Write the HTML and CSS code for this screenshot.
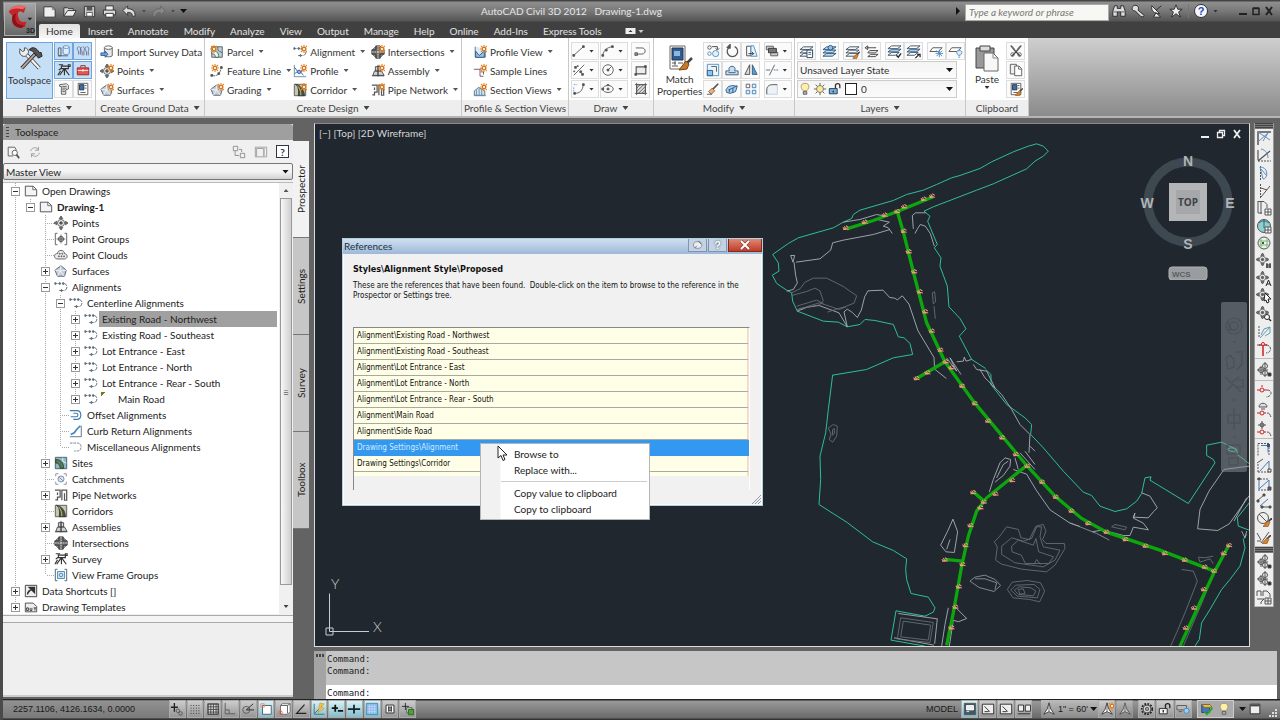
FILE: index.html
```html
<!DOCTYPE html>
<html lang="en">
<head>
<meta charset="utf-8">
<title>AutoCAD Civil 3D 2012 - Drawing-1.dwg</title>
<link rel="stylesheet" href="styles.css">
</head>
<body>
<svg class="defs" aria-hidden="true">
  <!-- shared parts -->
  <symbol id="spark" viewBox="0 0 8 8"><path d="M4 0v8M0 4h8M1 1l6 6M7 1L1 7" stroke="#e08a2c" stroke-width="1.2"/><circle cx="4" cy="4" r="1.6" fill="#fff" stroke="#d9701c"/></symbol>
  <symbol id="brush" viewBox="0 0 8 8"><path d="M8 0L4.500 3.500" stroke="#444" stroke-width="1.500"/><path d="M4.500 2.500L6 4 4.500 7.500 0 7.500z" fill="#d8862e" stroke="#8a4a10" stroke-width=".6"/></symbol>
  <!-- quick access -->
  <symbol id="new" viewBox="0 0 16 16"><path d="M2 3h9l3 3v8H2z" fill="#eee" stroke="#333"/><path d="M11 3v3h3" stroke="#777"/></symbol>
  <symbol id="open" viewBox="0 0 16 16"><path d="M2 13V4h4l1 1h5v3" fill="#ddd" stroke="#333"/><path d="M2 13l4-6h9l-3 6z" fill="#eee" stroke="#333"/></symbol>
  <symbol id="save" viewBox="0 0 16 16"><path d="M2.500 2.500h11v11h-11z" fill="#ccc" stroke="#333"/><path d="M5 3h6v4H5z" fill="#555" stroke="none"/><path d="M5 9h6v4H5z" fill="#fff" stroke="#555"/></symbol>
  <symbol id="print" viewBox="0 0 16 16"><path d="M4 2h8v5H4z" fill="#eee" stroke="#333"/><path d="M1.500 6.500h13v5h-13z" fill="#ddd" stroke="#333"/><path d="M4 10h8v4H4z" fill="#fff" stroke="#333"/></symbol>
  <symbol id="undo" viewBox="0 0 16 16"><path d="M1 7l5-5v3c5 0 8 2 8 8h-3c0-3-1-4-5-4v3z" fill="#ddd" stroke="#333"/></symbol>
  <symbol id="redo" viewBox="0 0 16 16"><path d="M15 7l-5-5v3c-5 0-8 2-8 8h3c0-3 1-4 5-4v3z" fill="#888" stroke="#666"/></symbol>
  <!-- palettes -->
  <symbol id="tools" viewBox="0 0 28 28"><path d="M10 9l14 15" stroke="#333" stroke-width="4"/><path d="M10 9l14 15" stroke="#f4f4f4" stroke-width="2.500"/><path d="M3 3l3 3 2-1 0-3c4 0 5 4 4 6l-3 3c-3 1-7-2-6-6z" fill="#eee" stroke="#444"/><path d="M20 8L5 24" stroke="#333" stroke-width="4"/><path d="M19 9L5 24" stroke="#bda49a" stroke-width="2"/><path d="M13 4c4-4 8-2 11 3l2 0 1 4-4 2-3-4c-2-3-4-4-7-5z" fill="#555" stroke="#222"/></symbol>
  <symbol id="prospector" viewBox="0 0 16 16"><path d="M1.500 4.500h3v9h-3zM1.500 13.500h11"/><path d="M7 3.500v7c0 2 7 2 7 0v-7" fill="#dceeff" stroke="#4a87c0"/><ellipse cx="10.500" cy="3.500" rx="3.500" ry="1.500" fill="#fff" stroke="#4a87c0"/></symbol>
  <symbol id="settings" viewBox="0 0 16 16"><path d="M3 3c-3 2-1 4 0 5v4M7 3c-3 2-1 4 0 6v4M12 3c-3 2-1 4 0 6v4M4 3c2 2 1 4 1 5v4M8 3c3 2 1 4 1 6v4M13 3c3 2 1 4 1 6v4" stroke="#668"/></symbol>
  <symbol id="survey" viewBox="0 0 16 16"><path d="M2 2h5M5 3.500h8v3H5zM13 2h2v2h-2zM8.500 7v7M8 7L3 14M9 7l5 7M2 8l3-2M1 14l3-5" stroke="#333" stroke-width="1.300"/></symbol>
  <symbol id="toolbox" viewBox="0 0 16 16"><path d="M5.500 5V3h5v2" stroke="#822"/><path d="M1.500 5.500h13v8h-13z" fill="#e4554c" stroke="#922"/><path d="M2 8.500h12M8 7v3" stroke="#fff"/></symbol>
  <symbol id="sheet" viewBox="0 0 16 16"><path d="M3 3l8-1 2 2v4l-3 1v5H5V5H3z" fill="#eee"/><path d="M6 5h5M6 7h5M6 9h3M6 11h3"/></symbol>
  <symbol id="props" viewBox="0 0 16 16"><path d="M2.500 1.500h11v13h-11z" fill="#fff"/><path d="M4 3h5v6H4z" fill="#3c6ca8" stroke="#234"/><path d="M10 4h2M10 7h2M5 12h6"/></symbol>
  <!-- objects -->
  <symbol id="import" viewBox="0 0 16 16"><path d="M5 3v9c0 2 9 2 9 0V3" fill="#e4e8ec"/><ellipse cx="9.500" cy="3" rx="4.500" ry="2" fill="#fff"/><path d="M1 9h5v-2l3 3.500L6 14v-2H1z" fill="#6ba3dc" stroke="#2a5c98"/></symbol>
  <symbol id="point" viewBox="0 0 16 16"><circle cx="8" cy="8" r="4" fill="#eee"/><circle cx="8" cy="8" r="1.500" fill="#555"/><path d="M8 0l2 3H6zM8 16l2-3H6zM0 8l3-2v4zM16 8l-3-2v4z" fill="#777"/></symbol>
  <symbol id="surface" viewBox="0 0 16 16"><path d="M8 2l6 5-2 7H4L1 7z" fill="#c3ced8" stroke="#556"/><path d="M8 2l-1 6 5 6M7 8l-3 6M1 7l6 1 7-1" stroke="#f2f6fa"/></symbol>
  <symbol id="parcel" viewBox="0 0 16 16"><path d="M2 2h12v12H2z" fill="#b9d4e4"/><path d="M2 7c5-1 8 1 8 7H6c0-3-1-4-4-4z" fill="#f0f4ef" stroke="#464"/><path d="M9 2v4l5 3" stroke="#467"/></symbol>
  <symbol id="sites" viewBox="0 0 16 16"><path d="M1.500 1.500h13v13h-13z" fill="#8fb8c4" stroke="#456"/><path d="M2 4c6 0 9 4 9 10H7C7 10 5 8 2 8z" fill="#5c7a50" stroke="#243"/><path d="M10 2v4l4 2" stroke="#dff"/></symbol>
  <symbol id="feature" viewBox="0 0 16 16"><path d="M2 13c7 2 10-3 11-10" stroke-dasharray="4 1"/><path d="M1 12h2v2H1zM9 10h2v2H9zM12 3h2v2h-2z" fill="#555"/></symbol>
  <symbol id="align" viewBox="0 0 16 16"><path d="M1 4h10" stroke="#567" stroke-dasharray="3 1"/><path d="M11 4c5 0 5 8 0 8H5" stroke="#567" stroke-dasharray="5 1"/><path d="M1 3h1v2H1zM6 3h1v2H6zM10 3h1v2h-1zM8 11h1v2H8z" fill="#9ab" stroke="#567"/></symbol>
  <symbol id="profile" viewBox="0 0 16 16"><path d="M1.500 1v13.500H15" stroke="#5b83a8"/><path d="M2 4l5 7 6-5M2 11l5-4 5 6" stroke="#456"/><circle cx="7" cy="9" r="2" fill="#7ab5e8" stroke="#36c"/></symbol>
  <symbol id="corridor" viewBox="0 0 16 16"><path d="M1.500 1.500h13v13h-13z" fill="#c4c7b4" stroke="#555"/><path d="M3 1.500c3 2 4 7 3 13h7C13 8 9 3 3 1.500z" fill="#4c5043" stroke="#333"/><path d="M5 3c3 3 4 7 4 11" stroke="#ddd35a"/></symbol>
  <symbol id="inter" viewBox="0 0 16 16"><circle cx="8" cy="8" r="6.500" fill="#999" stroke="#666"/><path d="M5.500 1h5v4.500H15v5h-4.500V15h-5v-4.500H1v-5h4.500z" fill="#666" stroke="#333"/><path d="M8 1v14M1 8h14" stroke="#eee" stroke-dasharray="2 1"/></symbol>
  <symbol id="assembly" viewBox="0 0 16 16"><path d="M8 1v13M5 3h6v5H5zM2 13l2-5h8l3 5z" fill="#cdd3d8" stroke="#444"/><path d="M1 13.500h14M8 2v12" stroke="#444"/></symbol>
  <symbol id="pipe" viewBox="0 0 16 16"><path d="M1 2.500h6v8H4v3H1.500M4 5v3M9 14V2.500h5.500V14H12V6" stroke="#555" stroke-width="1.400"/></symbol>
  <symbol id="pview" viewBox="0 0 16 16"><path d="M2.500 2v12H14V4" fill="#dceaf8" stroke="#4a6c94"/><path d="M3 7l4 5 6-5v7H3z" fill="#8fc3ee" stroke="#357"/></symbol>
  <symbol id="sample" viewBox="0 0 16 16"><path d="M1 6h7l5-2M8 6v8h4" stroke="#84434e"/><path d="M9 9h3v3"/></symbol>
  <symbol id="section" viewBox="0 0 16 16"><path d="M1.500 14V9l5-4 7 4v5z" fill="#d4e6f4" stroke="#567"/><path d="M1 14.500h14M4 8v6M7 6v8M10 8v6" stroke="#68a"/></symbol>
  <!-- draw and modify -->
  <symbol id="line" viewBox="0 0 16 16"><path d="M2 13L13 3"/><path d="M1 12h2v2H1zM12 2h2v2h-2z" fill="#555"/></symbol>
  <symbol id="arc" viewBox="0 0 16 16"><path d="M2 13C3 7 7 4 13 3"/><path d="M1 12h2v2H1zM5 6h2v2H5zM12 2h2v2h-2z" fill="#555"/></symbol>
  <symbol id="pline" viewBox="0 0 16 16"><path d="M2 4.500h7c5 0 5 7 0 7H2"/><path d="M1 10h3v3H1z" fill="#999"/></symbol>
  <symbol id="pts" viewBox="0 0 16 16"><path d="M2 14L14 2"/><path d="M3 4h2v2H3zM2 9h1v1H2zM9 9h2v2H9zM11 12h2v2h-2zM6 3h1v1H6z" fill="#555"/></symbol>
  <symbol id="circle" viewBox="0 0 16 16"><circle cx="8" cy="8" r="6"/><path d="M8 8l4-4"/><path d="M7 7h2v2H7z" fill="#555"/></symbol>
  <symbol id="rect" viewBox="0 0 16 16"><path d="M2.500 4.500h11v8h-11z" fill="#e8edf2" stroke-width="1.300"/><path d="M1 12h2v2H1zM12 3h2v2h-2z" fill="#444"/></symbol>
  <symbol id="curve" viewBox="0 0 16 16"><path d="M2 3h4M2 6v5" stroke="#6aa5d8" stroke-dasharray="2 1"/><path d="M3 13c6 0 9-3 10-10"/><path d="M2 12h2v2H2zM12 2h2v2h-2z" fill="#555"/></symbol>
  <symbol id="ellipse" viewBox="0 0 16 16"><ellipse cx="8" cy="8" rx="6" ry="4"/><path d="M7 7h2v2H7zM1 7h2v2H1zM7 3h2v1H7z" fill="#555"/></symbol>
  <symbol id="hatch" viewBox="0 0 16 16"><path d="M3 3h10v10H3z" fill="#ddd"/><path d="M1 3h14M1 13h14M3 1v14M13 1v14M3 7l4-4M3 11l8-8M5 13l8-8M9 13l4-4"/></symbol>
  <symbol id="match" viewBox="0 0 26 28"><path d="M3 2h15v23H3z" fill="#fff" stroke="#666"/><path d="M5 4h11v12H5z" fill="#2f5c94" stroke="#234"/><path d="M7 7h6v5H7z" fill="#8ab8e0" stroke="none"/><path d="M5 19h4M11 19h5M8 17v4M5 22h6" stroke="#555"/><path d="M25 14l-5 5" stroke="#444" stroke-width="2.500"/><path d="M19 17l3 3-2 5-8 1z" fill="#c9792d" stroke="#7c4510"/></symbol>
  <symbol id="copy" viewBox="0 0 16 16"><circle cx="4" cy="4" r="2"/><circle cx="11" cy="11" r="3.500" fill="#e3f1fc" stroke="#4a8cc4"/><circle cx="4" cy="11" r="2" stroke="#4a8cc4"/><path d="M7 3h6v3M11 5l2 2 2-2" stroke="#333"/></symbol>
  <symbol id="rotate" viewBox="0 0 16 16"><path d="M6 3a6 6 0 1 0 5 0" stroke-width="1.400"/><path d="M6 0v5l-4-1z" fill="#555"/></symbol>
  <symbol id="stretch" viewBox="0 0 16 16"><path d="M3 2.500h5v11H3z" stroke="#444"/><path d="M8 2h3l4 12H8z" fill="#e3f1fc" stroke="#4a8cc4"/><path d="M5 11h6M9 9l2 2-2 2" stroke="#333"/></symbol>
  <symbol id="order" viewBox="0 0 16 16"><path d="M1.500 2.500h8v4h-8zM6.500 9.500h8v4h-8z" fill="#ccc"/><path d="M4 5h9v5H4z" fill="#777" stroke="#333"/></symbol>
  <symbol id="scale" viewBox="0 0 16 16"><path d="M1.500 1.500h13v13h-13z" fill="#eaf4fd" stroke="#4a8cc4"/><path d="M1.500 8.500h6v6h-6z" fill="#8fc3ee" stroke="#357"/><path d="M6 4h6v6"/></symbol>
  <symbol id="offset" viewBox="0 0 16 16"><path d="M1 13.500h14V9h-4c3-7-9-7-6 0H1z" fill="#c3dff6" stroke="#357"/><path d="M4 11h8"/></symbol>
  <symbol id="mirror" viewBox="0 0 16 16"><path d="M6.500 2v11H1z" fill="#ddd" stroke="#444"/><path d="M9.500 2v11H15z" fill="#5b9bd5" stroke="#357"/></symbol>
  <symbol id="trim" viewBox="0 0 16 16"><path d="M1 8h5M10 8h2M13 8h2" stroke="#468"/><path d="M11 2L5 14"/></symbol>
  <symbol id="erase" viewBox="0 0 16 16"><path d="M14 2L7 9" stroke="#654" stroke-width="2"/><path d="M7 7l3 3-4 4-3-3z" fill="#e7b27b" stroke="#854"/><path d="M1 14h6"/></symbol>
  <symbol id="explode" viewBox="0 0 16 16"><path d="M1 9l3-4 5-1 5 1-2 6-6 2-4-1z" fill="#9fcdf2" stroke="#357"/><path d="M4 9l5-2 5-3M9 7v5M5 12v-4" stroke="#357"/></symbol>
  <symbol id="array" viewBox="0 0 16 16"><path d="M2.500 2.500h4v4h-4z"/><path d="M9.500 2.500h4v4h-4zM2.500 9.500h4v4h-4zM9.500 9.500h4v4h-4z" fill="#e3f1fc" stroke="#3c7ab5"/></symbol>
  <symbol id="fillet" viewBox="0 0 16 16"><path d="M2 14V9c0-4 3-6 7-6h5v11z" fill="#edf2f6" stroke="#bcd"/><path d="M2 14V9c0-4 3-6 7-6h5"/></symbol>
  <!-- layers -->
  <symbol id="layer" viewBox="0 0 16 16"><path d="M5 3h10l-4 3H1zM5 6.500h10l-4 3H1zM5 10h10l-4 3H1z" fill="#f4f8fb" stroke="#456"/></symbol>
  <symbol id="layerp" viewBox="0 0 16 16"><use href="#layer"/><path d="M8.500 6.500h6v8h-6z" fill="#fff" stroke="#246"/><path d="M10 9h3M10 11h3"/></symbol>
  <symbol id="layerb" viewBox="0 0 16 16"><path d="M5 3h10l-4 3H1zM5 6.500h10l-4 3H1zM5 10h10l-4 3H1z" fill="#b8dcf6" stroke="#357"/><circle cx="9" cy="4" r="2.500" fill="#8fc3ee" stroke="#357"/></symbol>
  <symbol id="layerm" viewBox="0 0 16 16"><use href="#layer"/><use href="#brush" x="8" y="8" width="8" height="8"/></symbol>
  <symbol id="layerv" viewBox="0 0 16 16"><path d="M3 4h10M1 4l3-2v4zM6 7h9l-3 2.500H4zM7 11h8l-3 2.500H4z" fill="#eee" stroke="#444"/></symbol>
  <symbol id="layerc" viewBox="0 0 16 16"><path d="M5 2h10l-4 3H1z" fill="#fff" stroke="#456"/><path d="M5 5.500h10l-4 3H1z" fill="#9fcdf2" stroke="#357"/><path d="M5 9h8l-4 3H1z" fill="#fff" stroke="#456"/><path d="M10 12l2 2 3-4" stroke="#222" stroke-width="1.500"/></symbol>
  <symbol id="layeru" viewBox="0 0 16 16"><path d="M5 2h10l-4 3H1z" fill="#fff" stroke="#456"/><path d="M5 5.500h10l-4 3H1z" fill="#9fcdf2" stroke="#357"/><path d="M5 9h8l-4 3H1z" fill="#fff" stroke="#456"/><path d="M10 15l4-4M12 11h3v3" stroke="#222" stroke-width="1.300"/></symbol>
  <symbol id="layerf" viewBox="0 0 16 16"><path d="M4 4h10l-4 4H1z" fill="#fff"/><path d="M11 6v8M7 10h8M8 7l6 6M14 7l-6 6" stroke="#4a8cc4"/></symbol>
  <symbol id="layero" viewBox="0 0 16 16"><path d="M4 4h10l-4 4H1z" fill="#fff"/><path d="M12 7c4 0 3 3 1 5h-2c-2-2-3-5 1-5zM11 14h2" fill="#dceeff" stroke="#4a8cc4"/></symbol>
  <symbol id="bulb" viewBox="0 0 16 16"><path d="M8 1.500c6 0 5 6 2 8.500H6C3 7.500 2 1.500 8 1.500z" fill="#fbf1a0" stroke="#a88"/><path d="M6 11h4v3H6z" fill="#bbb" stroke="#555"/></symbol>
  <symbol id="sun" viewBox="0 0 16 16"><path d="M8 1v14M1 8h14M3 3l10 10M13 3L3 13"/><circle cx="8" cy="8" r="4" fill="#f8e99a" stroke="#776"/></symbol>
  <symbol id="unlock" viewBox="0 0 16 16"><path d="M1.500 7.500h9v6h-9z" fill="#6fb0dc" stroke="#235"/><path d="M8.500 7V4c0-3 5-3 5 0v3M6 10v2" stroke="#333" stroke-width="1.500"/></symbol>
  <symbol id="lockw" viewBox="0 0 16 16"><path d="M1.500 7.500h9v6h-9z" fill="#f4f4f4" stroke="#222"/><path d="M8.500 7V4c0-3 5-3 5 0v3M6 9v3" stroke="#222" stroke-width="1.500"/></symbol>
  <symbol id="paste" viewBox="0 0 26 28"><path d="M2 4h18v20H2z" fill="#999" stroke="#444"/><path d="M6 2h10v5H6z" fill="#ddd" stroke="#444"/><path d="M10 9h9l5 5v13H10z" fill="#f7f7f7" stroke="#666"/><path d="M19 9v5h5" stroke="#888"/></symbol>
  <symbol id="cut" viewBox="0 0 16 16"><path d="M2 2l5 6 6 6M14 2L9 8l-6 6" stroke="#444" stroke-width="1.300"/><path d="M2 2c2 0 5 4 5 6M14 2c-2 0-5 4-5 6"/><circle cx="4" cy="12" r="2"/><circle cx="12" cy="12" r="2"/></symbol>
  <symbol id="pages" viewBox="0 0 16 16"><path d="M1.500 1.500h7v11h-7z" fill="#eee"/><path d="M6.500 3.500h5l3 3v8h-8z" fill="#fff"/><path d="M11 4v3h3"/></symbol>
  <symbol id="matchs" viewBox="0 0 16 16"><use href="#props"/><use href="#brush" x="7" y="7" width="9" height="9"/></symbol>
  <!-- info centre -->
  <symbol id="binoc" viewBox="0 0 16 16"><path d="M3 2h3v3h4V2h3l2 6v6h-5V9H6v5H1V8z" fill="#ddd" stroke="#222"/><path d="M2 9h4M10 9h4" stroke="#555"/></symbol>
  <symbol id="key" viewBox="0 0 16 16"><path d="M3 2c4-2 7 2 5 5l7 6-1 2-3-1-6-6C1 8 0 4 3 2z" fill="#ddd" stroke="#222"/></symbol>
  <symbol id="dish" viewBox="0 0 16 16"><path d="M2 2c-1 6 3 9 9 9zM7 7l6-5M4 15l3-5 5 5z" fill="#eee" stroke="#222"/></symbol>
  <symbol id="star" viewBox="0 0 16 16"><path d="M8 1l2 5h5l-4 3 2 6-5-4-5 4 2-6-4-3h5z" fill="#eee" stroke="#222"/></symbol>
  <!-- tree -->
  <symbol id="dwg" viewBox="0 0 16 16"><path d="M1.500 2.500h9l4 4v7h-13z" fill="#f4f4f6" stroke="#444"/><path d="M10 2.500v4h4" stroke="#666"/></symbol>
  <symbol id="pgroup" viewBox="0 0 16 16"><path d="M4 1.500H1.500v13H4M12 1.500h2.500v13H12"/><circle cx="8" cy="8" r="3" fill="#bbb"/><path d="M8 3v10M3 8h10"/></symbol>
  <symbol id="cloud" viewBox="0 0 16 16"><path d="M4 12.500c-5 0-4-7 0-6 0-5 8-5 8 0 4 0 4 6 0 6z" fill="#eee"/><path d="M6 6h1v1H6zM9 6h1v1H9zM5 9h1v1H5zM8 9h1v1H8zM11 9h1v1h-1z"/></symbol>
  <symbol id="offal" viewBox="0 0 16 16"><path d="M1 3h8c6 0 6 10 0 10H5M5 6h3c3 0 3 4 0 4H2" stroke="#3f78b0" stroke-width="1.300"/></symbol>
  <symbol id="curb" viewBox="0 0 16 16"><path d="M1 14.500h13V2" stroke="#567"/><path d="M2 12l4-2 3-4 4-4" stroke="#3f88c8" stroke-width="2"/></symbol>
  <symbol id="misc" viewBox="0 0 16 16"><path d="M1 3.500h9c5 0 5 9 0 9H6" stroke="#678" stroke-dasharray="3 1"/></symbol>
  <symbol id="catch" viewBox="0 0 16 16"><path d="M2 5V2h3M11 2h3v3M2 11v3h3M14 11v3h-3" stroke="#888"/><circle cx="8" cy="8" r="3.500" fill="#d7e6f4" stroke="#68a"/><path d="M6 6l4 4" stroke="#c64"/></symbol>
  <symbol id="vframe" viewBox="0 0 16 16"><path d="M4 1.500H1.500v13H4M12 1.500h2.500v13H12" stroke="#456"/><path d="M4 4h8v8H4z" fill="#cfe4f7" stroke="#48a"/><circle cx="8" cy="8" r="2" stroke="#48a"/></symbol>
  <symbol id="short" viewBox="0 0 16 16"><path d="M1.500 1.500h13v13h-13z" fill="#eee" stroke="#333"/><path d="M4 12c0-4 2-5 5-6M6 4h6v6z" fill="#333" stroke="#333" stroke-width="1.500"/></symbol>
  <symbol id="dwt" viewBox="0 0 16 16"><path d="M1.500 3.500h9l4 4v6h-13z" fill="#eee" stroke="#444"/><path d="M3 9v3h2V9zM7 9v3h2V9M11 9h3M12.500 9v3" stroke="#333"/></symbol>
  <symbol id="find" viewBox="0 0 16 16"><path d="M12 6L10 2.500H2.500v10H8" fill="#f4f4f4"/><circle cx="10" cy="9" r="3" fill="#fff"/><path d="M12 11l3 4" stroke-width="2"/></symbol>
  <symbol id="refresh" viewBox="0 0 16 16"><path d="M3 7c1-5 8-5 9-1M13 9c-1 5-8 5-9 1M12 2v4H8M4 14v-4h4" stroke="#999"/></symbol>
  <symbol id="nodes" viewBox="0 0 16 16"><path d="M1.500 1.500h5v5h-5zM9.500 9.500h5v5h-5zM8 5h3v3M3.500 7v5H8" stroke="#888"/></symbol>
  <symbol id="pane" viewBox="0 0 16 16"><path d="M1.500 2.500h13v11h-13zM3 13V4h8v9" stroke="#999"/><path d="M12 3v10" stroke="#bbb"/></symbol>
  <!-- side toolbar -->
  <symbol id="s1" viewBox="0 0 16 16"><path d="M2 15V2h13" stroke-width="1.500"/><path d="M2 2l12 8M3 11l9-8M7 11L12 3" stroke="#5f8fc0"/></symbol>
  <symbol id="s2" viewBox="0 0 16 16"><path d="M2 14L14 4M2 3v10" stroke-width="1.200"/><path d="M2 14h13" stroke-dasharray="2 1"/><path d="M5 2c5 1 7 5 7 9" stroke="#5f8fc0"/></symbol>
  <symbol id="s3" viewBox="0 0 16 16"><path d="M4.500 1v14" stroke-dasharray="2 1"/><path d="M4 2c9 0 8 12 3 12zM5 4l6 7" stroke="#5f8fc0"/></symbol>
  <symbol id="s4" viewBox="0 0 16 16"><path d="M4.500 1v14" stroke-dasharray="2 1"/><path d="M5 14L14 3M5 5l6 2"/></symbol>
  <symbol id="s5" viewBox="0 0 16 16"><path d="M2 1.500h6l3 3V8M2 1v12h4M5 2v12"/><path d="M9 9h6v6H9zM12 9v6M9 12h6" fill="#fff"/></symbol>
  <symbol id="s6" viewBox="0 0 16 16"><circle cx="8" cy="8" r="6.500" fill="#8fcfd0"/><path d="M3 5c3-3 7-2 10 0M8 2v8" stroke="#367"/><path d="M9 9h6v6H9zM12 9v6M9 12h6" fill="#fff"/></symbol>
  <symbol id="s7" viewBox="0 0 16 16"><circle cx="8" cy="8" r="6" fill="#e4f5e4"/><path d="M5 3v10M11 3v10M2 6h12M2 10h12" stroke="#8aaa8a"/><path d="M6 7h2v2H6z" fill="#197019" stroke="none"/></symbol>
  <symbol id="s8" viewBox="0 0 16 16"><use href="#point" width="13" height="13"/><path d="M11 10v5M14 10v5M10 12h5M10 14h5" stroke="#222"/></symbol>
  <symbol id="s9" viewBox="0 0 16 16"><use href="#point" width="13" height="13"/><path d="M10 15l2.500-6 2.500 6M11 13h3" stroke="#222"/></symbol>
  <symbol id="s10" viewBox="0 0 16 16"><use href="#point" width="13" height="13"/><path d="M9 5l6 6-3 0 1 3-2 1-1-3-2 1z" fill="#fff" stroke="#222"/></symbol>
  <symbol id="s11" viewBox="0 0 16 16"><use href="#point" width="13" height="13"/><circle cx="11" cy="11" r="2.500" fill="#fff" stroke="#222"/><path d="M13 13l2 2" stroke="#222" stroke-width="1.500"/></symbol>
  <symbol id="s12" viewBox="0 0 16 16"><path d="M3 2v12" stroke-dasharray="2 1"/><path d="M4 14L14 3 8 5 5 11M14 3v6l-5 3" stroke="#5fa0b0"/></symbol>
  <symbol id="s13" viewBox="0 0 16 16"><path d="M1 4h4M10 4c6 0 6 8 0 8" stroke-dasharray="3 1"/><path d="M7 5v10M3 4h8" stroke="#c22" stroke-width="1.500"/><circle cx="7" cy="3" r="1.500" fill="#fff" stroke="#c22"/></symbol>
  <symbol id="s14" viewBox="0 0 16 16"><circle cx="9" cy="4" r="2.500"/><circle cx="5" cy="8" r="2.500"/><circle cx="9" cy="11" r="2.500"/><path d="M9 0v15M1 8h11M5 4v9"/><path d="M12 11h3v3h-3z" fill="#222"/></symbol>
  <symbol id="s15" viewBox="0 0 16 16"><path d="M11 7c6 0 5 7-1 7" stroke-dasharray="3 1"/><circle cx="6" cy="7" r="2" stroke="#c22"/><path d="M1 7h3M8 7h3M6 2v2" stroke="#c22"/></symbol>
  <symbol id="s16" viewBox="0 0 16 16"><path d="M3 5c0-5 8-5 8 0zM5 7h4" fill="#ddd"/><path d="M1 11h3M8 11h2" stroke="#c22"/><circle cx="6" cy="11" r="2" stroke="#c22"/><path d="M11 11c3 0 3 2 4 4"/></symbol>
  <symbol id="s22" viewBox="0 0 16 16"><circle cx="6" cy="4" r="2"/><path d="M6 0v8M2 4h8"/><path d="M1 11h3M8 11h2" stroke="#c22"/><circle cx="6" cy="11" r="2" stroke="#c22"/><path d="M11 11c3 0 3 2 4 4"/></symbol>
  <symbol id="s17" viewBox="0 0 16 16"><path d="M2 15.500V3M2 3.500h11M13 4v11" stroke-dasharray="2 1"/><path d="M5 5.500h7v7" stroke="#4779b0"/><path d="M11 4h3v3h-3z" fill="#357" stroke="none"/></symbol>
  <symbol id="s18" viewBox="0 0 16 16"><path d="M2 14h13M2 6v8" stroke-dasharray="2 1"/><path d="M4 13L13 3v9" stroke="#4779b0"/><path d="M1 5l6-4M12 11h3v3h-3z"/></symbol>
  <symbol id="s23" viewBox="0 0 16 16"><path d="M1 3h11M2 14h13" stroke-dasharray="2 1"/><path d="M3 5v8l10-9v8" stroke="#4779b0"/><path d="M12 11h3v3h-3zM2 2h2v2H2z" fill="#556"/></symbol>
  <symbol id="s24" viewBox="0 0 16 16"><path d="M1 8l7-6M6 14h9"/><path d="M4 13l8-7" stroke="#4779b0"/><path d="M1 7h2v2H1zM7 1h2v2H7zM5 13h2v2H5zM13 13h2v2h-2z" fill="#444"/></symbol>
  <symbol id="s19" viewBox="0 0 16 16"><circle cx="7" cy="7" r="5.500" fill="#eee"/><path d="M3 3l8 8"/><use href="#brush" x="7" y="7" width="9" height="9"/></symbol>
  <symbol id="s20" viewBox="0 0 16 16"><path d="M1 4l4 7M5 14L13 3M1 12h4"/><use href="#brush" x="6" y="6" width="9" height="9"/></symbol>
  <symbol id="s21" viewBox="0 0 16 16"><path d="M1 7V2h4v5M7 7V2h4l3 3v3M1 10h7l-3 3v2M9 9h6v6H9zM12 9v6M9 12h6"/></symbol>
  <!-- status bar -->
  <symbol id="t1" viewBox="0 0 16 16"><path d="M1 6h8M5 1v10" stroke="#222" stroke-width="1.500"/><circle cx="9" cy="10" r="2"/><circle cx="12" cy="13" r="2"/></symbol>
  <symbol id="t2" viewBox="0 0 16 16"><path d="M3 4h10M3 7h10M3 10h10M3 13h10" stroke="#222" stroke-dasharray="1 2"/></symbol>
  <symbol id="t3" viewBox="0 0 16 16"><path d="M2 2h12v12H2z" fill="#ddd"/><path d="M2.500 2v12M5.500 2v12M8.500 2v12M11.500 2v12M14 2v12M2 2.500h12M2 5.500h12M2 8.500h12M2 11.500h12M2 14h12" stroke="#444"/></symbol>
  <symbol id="t4" viewBox="0 0 16 16"><path d="M2.500 1v12.500H14M3 9h4v4"/></symbol>
  <symbol id="t5" viewBox="0 0 16 16"><circle cx="6" cy="9" r="4"/><path d="M6 9l8-7M6 9h9" stroke="#222"/></symbol>
  <symbol id="t6" viewBox="0 0 16 16"><path d="M4 4h10v10H4z" fill="#fff" stroke="#456"/><path d="M2 2h4v4H2z" stroke="#e86"/></symbol>
  <symbol id="t7" viewBox="0 0 16 16"><path d="M4 4l2-2h9v9l-3 3H4z" fill="#fff" stroke="#666"/><path d="M4 4h8v9M12 4l3-2"/><circle cx="4" cy="12" r="2" stroke="#e55"/></symbol>
  <symbol id="t8" viewBox="0 0 16 16"><path d="M12 3L3 13h11" stroke="#222" stroke-width="1.300"/></symbol>
  <symbol id="t9" viewBox="0 0 16 16"><path d="M2.500 2v12H14M3 13l9-9" stroke="#467"/><path d="M9 1l5 1-4 4 4 1-7 5z" fill="#f3c33c" stroke="#b83" stroke-width=".5"/></symbol>
  <symbol id="t10" viewBox="0 0 16 16"><path d="M2 7h7M6 3v8M9 10h6" stroke="#111" stroke-width="2"/></symbol>
  <symbol id="t11" viewBox="0 0 16 16"><path d="M1 8h14M8 3v10" stroke="#123" stroke-width="2"/></symbol>
  <symbol id="t12" viewBox="0 0 16 16"><path d="M1.500 1.500h13v13h-13z" fill="#8ab8e8" stroke="#48a"/><path d="M3 5h10M3 8h10M3 11h10M5 3v10M8 3v10M11 3v10" stroke="#b8d8f8"/></symbol>
  <symbol id="t13" viewBox="0 0 16 16"><path d="M3.500 3.500h9v9h-9z" fill="#fff" stroke="#222"/><path d="M6 6h4M6 8h4M6 10h4M6.500 5v6M9.500 5v6" stroke="#222"/></symbol>
  <symbol id="t14" viewBox="0 0 16 16"><path d="M1 5h8M5 1v8" stroke="#222"/><path d="M6.500 6.500h6v6h-6z" fill="#bda"/><path d="M8.500 8.500h6v6h-6z" fill="#5a9a3a" stroke="#262"/></symbol>
  <symbol id="lay" viewBox="0 0 16 16"><path d="M1.500 2.500h13v11h-13z" fill="#eee" stroke="#222"/><path d="M4 5l6 6M4 11h5" stroke="#222"/></symbol>
  <symbol id="mod" viewBox="0 0 16 16"><path d="M1.500 1.500h13v13h-13z" fill="#456"/><path d="M4 4h8v5H4zM4 11h3" fill="#eee" stroke="#fff"/></symbol>
  <symbol id="two" viewBox="0 0 16 16"><path d="M1.500 3.500h6v7h-6zM9.500 3.500h6v7h-6z" fill="#eee" stroke="#222"/><path d="M1 13.500h14" stroke="#222"/></symbol>
  <symbol id="anno" viewBox="0 0 16 16"><path d="M8 1L6 8l-4 6 6-3 6 3-4-6z" fill="#fff" stroke="#333"/><path d="M8 1v10"/></symbol>
  <symbol id="gear" viewBox="0 0 16 16"><circle cx="8" cy="8" r="6" stroke="#222" stroke-width="2" stroke-dasharray="2 1.500"/><circle cx="8" cy="8" r="4.500" fill="#ddd" stroke="#333"/><circle cx="8" cy="8" r="2" fill="#999"/></symbol>
  <symbol id="hw" viewBox="0 0 16 16"><path d="M1 4h11v5H1z" fill="#bbb"/><path d="M3 11h4"/><circle cx="12" cy="10" r="3" fill="#9cf" stroke="#48a"/></symbol>
  <symbol id="tray" viewBox="0 0 16 16"><path d="M2 3h9v9H2z" fill="#47b" stroke="#246"/><path d="M2 3h9l3 3H5z" fill="#f3d03c" stroke="#863"/><path d="M5 11l3 3 6-7" stroke="#2a2" stroke-width="2"/></symbol>
  <symbol id="clean" viewBox="0 0 16 16"><path d="M2.500 2.500h11v11h-11z" fill="#eee" stroke="#222"/><path d="M3 4h10" stroke="#444" stroke-width="2"/></symbol>
</svg>

<header class="titlebar">
  <button class="app" aria-label="Application menu">
    <svg viewBox="0 0 32 32"><path d="M4 8C6 1 17 0 22 3l-2 6c-5-3-7-1-6 4 1 5 4 7 9 5l-2 6C13 27 5 22 8 12z" fill="#c3242b"/><path d="M4 8C7 3 14 4 19 5l3-2C17 0 6 1 4 8z" fill="#ee6a66"/><path d="M8 12c-2 8 3 13 10 13l2-3C13 22 9 18 12 9z" fill="#8d1117"/><path d="M24 14l5 0-2.500 3z" fill="#222"/></svg>
    <span>3D</span>
  </button>
  <div class="topline">
    <nav class="qat" aria-label="Quick access">
      <button aria-label="New"><svg class="i"><use href="#new"/></svg></button>
      <button aria-label="Open"><svg class="i"><use href="#open"/></svg></button>
      <button aria-label="Save"><svg class="i"><use href="#save"/></svg></button>
      <button aria-label="Print"><svg class="i"><use href="#print"/></svg></button>
      <button aria-label="Undo"><svg class="i"><use href="#undo"/></svg></button>
      <i class="car"></i>
      <button aria-label="Redo"><svg class="i"><use href="#redo"/></svg></button>
      <i class="car"></i>
      <i class="car big"></i>
    </nav>
    <h1>AutoCAD Civil 3D 2012 <span>Drawing-1.dwg</span></h1>
    <i class="play"></i>
    <input class="search" type="text" placeholder="Type a keyword or phrase" aria-label="Search">
    <div class="info">
      <button aria-label="Search"><svg class="i"><use href="#binoc"/></svg></button>
      <button aria-label="Subscription"><svg class="i"><use href="#key"/></svg></button>
      <button aria-label="Communication"><svg class="i"><use href="#dish"/></svg></button>
      <button aria-label="Favorites"><svg class="i"><use href="#star"/></svg></button>
      <i class="vsep"></i>
      <button class="help" aria-label="Help">?</button>
      <i class="car"></i>
    </div>
    <div class="win">
      <button aria-label="Minimize"><svg viewBox="0 0 10 10"><path d="M1 8h8" stroke-width="2"/></svg></button>
      <button aria-label="Maximize"><svg viewBox="0 0 10 10"><path d="M2 2.500h6v6H2zM2 2h6" stroke-width="1.500"/></svg></button>
      <button aria-label="Close"><svg viewBox="0 0 10 10"><path d="M2 1l6 8M8 1L2 9" stroke-width="2"/></svg></button>
    </div>
  </div>
  <nav class="tabs" aria-label="Ribbon tabs">
    <button class="on">Home</button><button>Insert</button><button>Annotate</button><button>Modify</button><button>Analyze</button><button>View</button><button>Output</button><button>Manage</button><button>Help</button><button>Online</button><button>Add-Ins</button><button>Express Tools</button>
    <button class="mini" aria-label="Minimize ribbon"><svg viewBox="0 0 20 8"><path d="M1 1h10v6H1z" fill="#eee"/><path d="M4 5l2-2 2 2z" fill="#333"/><path d="M14 3h5l-2.500 3z" fill="#ccc"/></svg></button>
  </nav>
</header>

<section class="ribbon" aria-label="Home ribbon">
  <div class="panel p-pal">
    <div class="body">
      <button class="large lit"><svg class="i28"><use href="#tools"/></svg>Toolspace</button>
      <div class="grid g2">
        <button class="lit" aria-label="Prospector"><svg class="i"><use href="#prospector"/></svg></button><button class="lit" aria-label="Settings"><svg class="i"><use href="#settings"/></svg></button>
        <button class="lit" aria-label="Survey"><svg class="i"><use href="#survey"/></svg></button><button class="lit" aria-label="Toolbox"><svg class="i"><use href="#toolbox"/></svg></button>
        <button aria-label="Tool palettes"><svg class="i"><use href="#sheet"/></svg></button><button aria-label="Properties"><svg class="i"><use href="#props"/></svg></button>
      </div>
    </div>
    <footer>Palettes<i class="car"></i></footer>
  </div>
  <div class="panel p-gnd">
    <div class="body">
      <div class="col">
        <button><svg class="i"><use href="#import"/></svg>Import Survey Data</button>
        <button><svg class="i"><use href="#point"/><use href="#spark" x="7" width="8" height="8"/></svg>Points<i class="car"></i></button>
        <button><svg class="i"><use href="#surface"/><use href="#spark" x="7" width="8" height="8"/></svg>Surfaces<i class="car"></i></button>
      </div>
    </div>
    <footer>Create Ground Data<i class="car"></i></footer>
  </div>
  <div class="panel p-des">
    <div class="body">
      <div class="col c1">
        <button><svg class="i"><use href="#parcel"/><use href="#spark" width="8" height="8"/></svg>Parcel<i class="car"></i></button>
        <button><svg class="i"><use href="#feature"/><use href="#spark" x="1" width="8" height="8"/></svg>Feature Line<i class="car"></i></button>
        <button><svg class="i"><use href="#surface"/><use href="#spark" x="7" width="8" height="8"/></svg>Grading<i class="car"></i></button>
      </div>
      <div class="col c2">
        <button><svg class="i"><use href="#align"/><use href="#spark" x="7" width="8" height="8"/></svg>Alignment<i class="car"></i></button>
        <button><svg class="i"><use href="#profile"/><use href="#spark" x="7" width="8" height="8"/></svg>Profile<i class="car"></i></button>
        <button><svg class="i"><use href="#corridor"/><use href="#spark" x="7" width="8" height="8"/></svg>Corridor<i class="car"></i></button>
      </div>
      <div class="col">
        <button><svg class="i"><use href="#inter"/><use href="#spark" x="7" width="8" height="8"/></svg>Intersections<i class="car"></i></button>
        <button><svg class="i"><use href="#assembly"/><use href="#spark" x="7" width="8" height="8"/></svg>Assembly<i class="car"></i></button>
        <button><svg class="i"><use href="#pipe"/><use href="#spark" x="7" width="8" height="8"/></svg>Pipe Network<i class="car"></i></button>
      </div>
    </div>
    <footer>Create Design<i class="car"></i></footer>
  </div>
  <div class="panel p-prof">
    <div class="body">
      <div class="col">
        <button><svg class="i"><use href="#pview"/><use href="#spark" x="7" width="8" height="8"/></svg>Profile View<i class="car"></i></button>
        <button><svg class="i"><use href="#sample"/><use href="#spark" x="7" width="8" height="8"/></svg>Sample Lines</button>
        <button><svg class="i"><use href="#section"/><use href="#spark" x="7" width="8" height="8"/></svg>Section Views<i class="car"></i></button>
      </div>
    </div>
    <footer>Profile &amp; Section Views</footer>
  </div>
  <div class="panel p-draw">
    <div class="body">
      <div class="grid split2">
        <button class="split" aria-label="Line"><svg class="i"><use href="#line"/></svg><i class="car"></i></button><button class="split" aria-label="Arc"><svg class="i"><use href="#arc"/></svg><i class="car"></i></button>
        <button class="split" aria-label="Point lines"><svg class="i"><use href="#pts"/></svg><i class="car"></i></button><button class="split" aria-label="Circle"><svg class="i"><use href="#circle"/></svg><i class="car"></i></button>
        <button class="split" aria-label="Curve"><svg class="i"><use href="#curve"/></svg><i class="car"></i></button><button class="split" aria-label="Ellipse"><svg class="i"><use href="#ellipse"/></svg><i class="car"></i></button>
      </div>
      <div class="grid g1">
        <button aria-label="Polyline"><svg class="i"><use href="#pline"/></svg></button>
        <button aria-label="Rectangle"><svg class="i"><use href="#rect"/></svg></button>
        <button aria-label="Hatch"><svg class="i"><use href="#hatch"/></svg></button>
      </div>
    </div>
    <footer>Draw<i class="car"></i></footer>
  </div>
  <div class="panel p-mod">
    <div class="body">
      <button class="large"><svg class="i28"><use href="#match"/></svg>Match<br>Properties</button>
      <div class="grid g3">
        <button aria-label="Move"><svg class="i"><use href="#copy"/></svg></button><button aria-label="Rotate"><svg class="i"><use href="#rotate"/></svg></button><button aria-label="Stretch"><svg class="i"><use href="#stretch"/></svg></button>
        <button aria-label="Scale"><svg class="i"><use href="#scale"/></svg></button><button aria-label="Offset"><svg class="i"><use href="#offset"/></svg></button><button aria-label="Mirror"><svg class="i"><use href="#mirror"/></svg></button>
        <button aria-label="Erase"><svg class="i"><use href="#erase"/></svg></button><button aria-label="Explode"><svg class="i"><use href="#explode"/></svg></button><button aria-label="Array"><svg class="i"><use href="#array"/></svg></button>
      </div>
      <div class="grid split1">
        <button class="split" aria-label="Draw order"><svg class="i"><use href="#order"/></svg><i class="car"></i></button>
        <button class="split" aria-label="Trim"><svg class="i"><use href="#trim"/></svg><i class="car"></i></button>
        <button class="split" aria-label="Fillet"><svg class="i"><use href="#fillet"/></svg><i class="car"></i></button>
      </div>
    </div>
    <footer>Modify<i class="car"></i></footer>
  </div>
  <div class="panel p-lay">
    <div class="body stack">
      <div class="layrow">
        <div class="grid g1"><button aria-label="Layer properties"><svg class="i"><use href="#layerp"/></svg></button></div>
        <div class="grid g1"><button aria-label="Layer states"><svg class="i"><use href="#layerb"/></svg></button></div>
        <div class="grid g2"><button aria-label="Layer match"><svg class="i"><use href="#layerm"/></svg></button><button aria-label="Layer previous"><svg class="i"><use href="#layerv"/></svg></button></div>
        <div class="grid g2"><button aria-label="Isolate"><svg class="i"><use href="#layerc"/></svg></button><button aria-label="Unisolate"><svg class="i"><use href="#layeru"/></svg></button></div>
        <div class="grid g2"><button aria-label="Freeze"><svg class="i"><use href="#layerf"/></svg></button><button aria-label="Layer off"><svg class="i"><use href="#layero"/></svg></button></div>
      </div>
      <div class="combo"><select aria-label="Layer state"><option>Unsaved Layer State</option></select><i class="car big"></i></div>
      <div class="combo"><svg class="i"><use href="#bulb"/></svg><svg class="i"><use href="#sun"/></svg><svg class="i"><use href="#unlock"/></svg><i class="swatch"></i><select aria-label="Current layer"><option>0</option></select><i class="car big"></i></div>
    </div>
    <footer>Layers<i class="car"></i></footer>
  </div>
  <div class="panel p-clip">
    <div class="body">
      <button class="large"><svg class="i28"><use href="#paste"/></svg>Paste<i class="car"></i></button>
      <div class="grid g1">
        <button aria-label="Cut"><svg class="i"><use href="#cut"/></svg></button>
        <button aria-label="Copy"><svg class="i"><use href="#pages"/></svg></button>
        <button aria-label="Match properties"><svg class="i"><use href="#matchs"/></svg></button>
      </div>
    </div>
    <footer>Clipboard</footer>
  </div>
</section>

<main class="work">
  <aside class="toolspace">
    <div class="ts">
      <h2><i class="grip"></i>Toolspace</h2>
      <div class="tsbar">
        <button aria-label="Find"><svg class="i"><use href="#find"/></svg></button>
        <button aria-label="Refresh"><svg class="i"><use href="#refresh"/></svg></button>
        <button class="push" aria-label="Items"><svg class="i"><use href="#nodes"/></svg></button>
        <button aria-label="Panorama"><svg class="i"><use href="#pane"/></svg></button>
        <button class="q" aria-label="Help">?</button>
      </div>
      <div class="combo view"><select aria-label="View"><option>Master View</option></select><i class="car big"></i></div>
      <div class="treebox">
        <ul class="tree">
          <li><div class="row"><button aria-label="Collapse"></button><svg class="i"><use href="#dwg"/></svg><span>Open Drawings</span></div>
            <ul><li><div class="row"><button aria-label="Collapse"></button><svg class="i"><use href="#dwg"/></svg><span class="b">Drawing-1</span></div>
              <ul>
                <li><div class="row leaf"><svg class="i"><use href="#point"/></svg><span>Points</span></div></li>
                <li><div class="row leaf"><svg class="i"><use href="#pgroup"/></svg><span>Point Groups</span></div></li>
                <li><div class="row leaf"><svg class="i"><use href="#cloud"/></svg><span>Point Clouds</span></div></li>
                <li><div class="row"><button class="plus" aria-label="Expand"></button><svg class="i"><use href="#surface"/></svg><span>Surfaces</span></div></li>
                <li><div class="row"><button aria-label="Collapse"></button><svg class="i"><use href="#align"/></svg><span>Alignments</span></div>
                  <ul>
                    <li><div class="row"><button aria-label="Collapse"></button><svg class="i"><use href="#align"/></svg><span>Centerline Alignments</span></div>
                      <ul>
                        <li><div class="row"><button class="plus" aria-label="Expand"></button><svg class="i"><use href="#align"/></svg><span class="sel">Existing Road - Northwest</span></div></li>
                        <li><div class="row"><button class="plus" aria-label="Expand"></button><svg class="i"><use href="#align"/></svg><span>Existing Road - Southeast</span></div></li>
                        <li><div class="row"><button class="plus" aria-label="Expand"></button><svg class="i"><use href="#align"/></svg><span>Lot Entrance - East</span></div></li>
                        <li><div class="row"><button class="plus" aria-label="Expand"></button><svg class="i"><use href="#align"/></svg><span>Lot Entrance - North</span></div></li>
                        <li><div class="row"><button class="plus" aria-label="Expand"></button><svg class="i"><use href="#align"/></svg><span>Lot Entrance - Rear - South</span></div></li>
                        <li><div class="row"><button class="plus" aria-label="Expand"></button><svg class="i"><use href="#align"/></svg><i class="flag"></i><span>Main Road</span></div></li>
                      </ul></li>
                    <li><div class="row leaf"><svg class="i"><use href="#offal"/></svg><span>Offset Alignments</span></div></li>
                    <li><div class="row leaf"><svg class="i"><use href="#curb"/></svg><span>Curb Return Alignments</span></div></li>
                    <li><div class="row leaf"><svg class="i"><use href="#misc"/></svg><span>Miscellaneous Alignments</span></div></li>
                  </ul></li>
                <li><div class="row"><button class="plus" aria-label="Expand"></button><svg class="i"><use href="#sites"/></svg><span>Sites</span></div></li>
                <li><div class="row leaf"><svg class="i"><use href="#catch"/></svg><span>Catchments</span></div></li>
                <li><div class="row"><button class="plus" aria-label="Expand"></button><svg class="i"><use href="#pipe"/></svg><span>Pipe Networks</span></div></li>
                <li><div class="row leaf"><svg class="i"><use href="#corridor"/></svg><span>Corridors</span></div></li>
                <li><div class="row"><button class="plus" aria-label="Expand"></button><svg class="i"><use href="#assembly"/></svg><span>Assemblies</span></div></li>
                <li><div class="row leaf"><svg class="i"><use href="#inter"/></svg><span>Intersections</span></div></li>
                <li><div class="row"><button class="plus" aria-label="Expand"></button><svg class="i"><use href="#survey"/></svg><span>Survey</span></div></li>
                <li><div class="row leaf"><svg class="i"><use href="#vframe"/></svg><span>View Frame Groups</span></div></li>
              </ul></li></ul></li>
          <li><div class="row"><button class="plus" aria-label="Expand"></button><svg class="i"><use href="#short"/></svg><span>Data Shortcuts []</span></div></li>
          <li><div class="row"><button class="plus" aria-label="Expand"></button><svg class="i"><use href="#dwt"/></svg><span>Drawing Templates</span></div></li>
        </ul>
        <div class="scroll"><i class="up"></i><div class="thumb">≡</div><i class="car"></i></div>
      </div>
      <div class="preview"></div>
    </div>
    <nav class="vtabs" aria-label="Toolspace tabs"><button class="on">Prospector</button><button>Settings</button><button>Survey</button><button>Toolbox</button></nav>
  </aside>

  <div class="right">
    <div class="upper">
      <section class="canvas" aria-label="Drawing">
        <svg class="map" viewBox="315 124 934 523" preserveAspectRatio="xMidYMid slice">
          <defs><marker id="tick" viewBox="0 0 18 14" markerWidth="22" markerHeight="17" refX="9" refY="7" markerUnits="userSpaceOnUse"><path d="M1 5l6 5M5 2l5 9M9 1l6 4M8 8l8 2M2 10h6" stroke="#f79a7e" stroke-width="2.500" fill="none"/></marker></defs>
          <g transform="translate(760 120) scale(.3333)">
            <path class="cy" d="M865 95L850 80 830 73 805 80 760 97 695 127 660 147 600 168 575 175 530 195 490 212 440 225 400 243 300 272 280 285 275 297 250 308 220 325 115 355 85 372 38 405 55 430 57 455 37 467 50 492 80 512 95 520 98 545 112 575 190 605 235 608 262 622 300 615 315 600 345 603 400 615 415 652 432 655 450 672 458 705 400 715 320 750 218 767"/>
            <path class="cy" d="M865 95L850 110 825 125 800 148 700 193 650 212 520 262 492 275 510 290 503 305 532 375 523 385 543 415 540 440 562 500 567 562 600 597 618 628 598 650 635 720 677 747"/>
            <path class="wh" d="M250 308L300 300 350 285 375 290 352 300 388 308 370 320 385 325 397 342M390 330L340 345 250 362 218 370 212 392 180 418 108 428M92 408h12l-5 20zM102 428l5 40 5 22-12 20-20 5M112 575l30-12 35-5 60 22 25 42-10-45 10-8 15 10 15 15 12-22 10-40 10-18 45-2 20 22 15 2 8 5 15-12 20 25 27 80 48 80 2 35 35 28M465 342l8-15 8-12 15 5 15 22 12 38M460 328l-3-40 10-8 30 0M560 715l30 40-20-40 33 50M590 727l20-2 3-12 5 12 17-5M640 735l10 15 30 5 25 50"/>
            <path class="gr" d="M95 520l25-12 15-20 25-12 40 0 50 25 40 28-8 22-30 12-20 5-30 10M95 528l45-12 25-10 15 8 10 30-10 12-65 12M110 560l60-18 20 10M108 572l70-22 60 20 20-8M517 520l7-3 3 30-7 6zM522 560l4 38"/>
          </g>
          <g transform="translate(780 370) scale(.3333)">
            <path class="cy" d="M158 16L145 120 137 190 120 260 122 330 117 405 200 458 278 517 340 543 380 568 377 600 380 630 393 672 445 683 465 715 460 728 435 740 348 724 333 812 435 830"/>
            <path class="cy" d="M617 0L633 15 633 45 680 105 735 145 755 165 752 195"/>
            <path class="gr" d="M145 175l15-10 12 5-2 30-12 18-10-8 5-15zM158 180l5-3v15l-6 5z"/>
            <path class="wh" d="M600 0l15 25 50 50 30 45 25 45 30 30-3 55M720 250l45 50M735 245l30 40M705 265l10 35M750 230l15 15M628 368l12-38 20-50 15-15 17 5-2 20-20 28-25 20M650 325l20-40 15-10M700 300l40 14 30 50 40 57 60 40 30 10M482 527l20-40 17-38 14 38-10 62-25-2zM500 540l10-30"/>
            <path class="gr" d="M643 517l15-15 22-30 35 8 8 25 25 5 20-40 22-5 8 20-10 25 10 12 55 0 2 15-30 50-25 20-75-8-60-15-18-12 5-40zM665 530l30-25 35 10 25-8 15-35 15 0-5 30 10 30 50 10-15 30-35 20-85-12-40-25zM695 530l20-18 45 15 8-20 8 40 45 15-15 20-70 0-12-25-28-10zM762 585l8-15 12 15"/>
            <path class="wh2" d="M570 635l15-12 30-6 30 13 17 18-20 18-45-12zM585 628l30 0 35 12-5 20"/>
            <path class="gr" d="M682 660l15-22 45-5 40 7 12 25-15 32-30-7-50-5zM692 662l15-15 55-2 18 15-8 25-60-5zM703 662l15-10 35 3 15 10-8 14-45-4zM715 660l15-2 5 14-15 2z"/>
            <path class="wh" d="M355 732l117 16-8 75M342 805l120 22M505 715l-10 50-10 65M525 712l35 35-25 10-15-5-12 78"/>
            <path class="gr" d="M362 745l98 14-10 60-98-10zM370 755l82 12-7 45-83-10z"/>
          </g>
          <g transform="translate(1000 390) scale(.3333)">
            <path class="cy" d="M92 135L130 175 190 245 250 308 275 318 300 350 345 366 380 358 410 335 425 312 435 265 453 262 450 272 565 342 645 220 640 210 620 198 620 167 665 158 710 180 712 195 747 222M748 340L712 385 715 410 748 422M740 435L730 450 735 475 720 530 690 570 665 600 630 660 605 700 598 750 585 770M680 180q15-10 30 0-5 12-30 0"/>
            <path class="wh" d="M747 230l-75 10-45 65-27 55-7 58 60 5 35-20 60-85M425 310l25 10 22 35-12 12-15 18-45-2 5-12-5 15 30 15 15 20-45-8-10 25-20 0-30-8-35-8-28 5M725 425l10 20 5-20M740 325l-38 70"/>
            <path class="wh2" d="M210 400l80 32 38 20"/>
            <path class="gr" d="M335 412l10-7 35 8-5 8zM640 500l-25 5-20-2 5 15 30-10 10 15M545 540l35 5 12 30-35 90-25 60-20 45M640 550l-30 80-60 140"/>
          </g>
          <g transform="translate(760 120) scale(.3333)"><path class="road" d="M260 328L340 303 412 276 520 232M412 276L432 345 462 465 500 610 555 727 640 845 800 1038 885 1130 965 1197 1040 1238 1200 1292 1363 1355M470 777L555 727M800 1038L680 1135 650 1175 625 1250 605 1340 580 1480 560 1578M640 1117L672 1145M555 1320L608 1325M1408 1275L1363 1358 1320 1450 1260 1580"/>
            <path class="ticks" d="M258 326L315 308 375 287 433 262 492 239 517 230M412 276L432 335 447 397 463 457 480 517 496 577 516 635 542 692 558 727 575 745 607 800 645 852 685 905 727 955 768 1005 803 1040 847 1088 888 1133 935 1175 985 1212 1040 1238 1097 1260 1157 1280 1215 1302 1275 1322 1335 1343 1363 1355M470 777L503 760M757 1083L707 1124 672 1148 662 1165 632 1218 617 1278 608 1335 597 1402 587 1463 575 1525M640 1119L555 1322M1408 1278L1392 1302 1332 1410 1303 1466 1278 1526"/>
          </g>
          <g class="ucs"><path d="M329.500 594v38H369M326 628.500h7v7h-7z"/><text x="331" y="589">Y</text><text x="373" y="632">X</text></g>
        </svg>
        <span class="vp">[−] [Top] [2D Wireframe]</span>
        <div class="docwin">
          <button aria-label="Minimize drawing"><svg viewBox="0 0 10 10"><path d="M1 8h8" stroke-width="2"/></svg></button>
          <button aria-label="Restore drawing"><svg viewBox="0 0 10 10"><path d="M1.500 3.500h5v5h-5zM3.500 3V1.500h5v5H7" stroke-width="1.300"/></svg></button>
          <button aria-label="Close drawing"><svg viewBox="0 0 10 10"><path d="M2 1l6 8M8 1L2 9" stroke-width="1.800"/></svg></button>
        </div>
        <svg class="cube" viewBox="0 0 100 130">
          <circle cx="50" cy="52" r="40" fill="none" stroke="#3e4850" stroke-width="9"/>
          <path d="M31 33h38v38H31z" fill="#b3b5b6"/><path d="M38 40h24v24H38z" fill="#a5a7aa"/>
          <g text-anchor="middle"><text class="nsew" x="50" y="16">N</text><text class="nsew" x="50" y="99">S</text><text class="nsew" x="9" y="58">W</text><text class="nsew" x="92" y="58">E</text><text class="top" x="50" y="56">TOP</text></g>
          <rect x="31" y="117" width="38" height="13" rx="3" fill="#999da0" stroke="#b0b3b5"/><text class="wcs" x="34" y="127">WCS</text>
        </svg>
        <svg class="navbar" viewBox="0 0 26 170"><g fill="none" stroke="#485156" stroke-width="1.200"><circle cx="13" cy="24" r="8"/><circle cx="13" cy="24" r="4"/><path d="M8 20v8h7M12 40h3M5 56l4-3 4 4v8l-6 2zM14 50h7v12l-5 6M4 75l6 6 8-6M6 88l6-6 8 8M16 78h6v7h-6M12 98h3M13 106v22M7 113h12v8H7zM12 135h3M6 143h13v9H6zM8 156h9v7H8z"/></g></svg>

        <section class="dialog" aria-label="References">
          <header><h3>References</h3>
            <button class="pin" aria-label="Pin"><svg viewBox="0 0 16 12"><ellipse cx="8" cy="6" rx="5" ry="4" fill="#eee" stroke="#789"/><path d="M9 1l3 4M4 10l3-3" stroke="#567"/></svg></button><button class="dq" aria-label="Help">?</button><button class="x" aria-label="Close"><svg viewBox="0 0 12 10"><path d="M2 1l8 8M10 1L2 9" stroke="#843" stroke-width="3.500"/><path d="M2 1l8 8M10 1L2 9" stroke="#fff" stroke-width="2"/></svg></button>
          </header>
          <h4>Styles\Alignment Style\Proposed</h4>
          <p>These are the references that have been found.&nbsp; Double-click on the item to browse to the reference in the Prospector or Settings tree.</p>
          <div class="list">
            <table>
              <tr><td>Alignment\Existing Road - Northwest</td></tr>
              <tr><td>Alignment\Existing Road - Southeast</td></tr>
              <tr><td>Alignment\Lot Entrance - East</td></tr>
              <tr><td>Alignment\Lot Entrance - North</td></tr>
              <tr><td>Alignment\Lot Entrance - Rear - South</td></tr>
              <tr><td>Alignment\Main Road</td></tr>
              <tr><td>Alignment\Side Road</td></tr>
              <tr class="sel"><td>Drawing Settings\Alignment</td></tr>
              <tr><td>Drawing Settings\Corridor</td></tr>
              <tr class="end"><td></td></tr>
            </table>
          </div>
          <svg class="size" viewBox="0 0 10 10"><path d="M1 10l9-9M4 10l6-6M7 10l3-3" stroke="#99a" fill="none"/></svg>
        </section>
        <div class="menu" role="menu">
          <button role="menuitem">Browse to</button><button role="menuitem">Replace with...</button><hr><button role="menuitem">Copy value to clipboard</button><button role="menuitem">Copy to clipboard</button>
        </div>
        <svg class="cursor" viewBox="0 0 11 17"><path d="M1 1v12l3-2.500 2 5 2-1-2-4.500h4z" fill="#fff" stroke="#222"/></svg>
      </section>
      <div class="side">
        <i class="sgrip"></i>
        <div class="sgroup r13">
          <svg class="i"><use href="#s1"/></svg><svg class="i"><use href="#s2"/></svg><svg class="i"><use href="#s3"/></svg><svg class="i"><use href="#s4"/></svg><svg class="i"><use href="#s5"/></svg><svg class="i"><use href="#s6"/></svg><svg class="i"><use href="#s7"/></svg><svg class="i"><use href="#s8"/></svg><svg class="i"><use href="#s9"/></svg><svg class="i"><use href="#s10"/></svg><svg class="i"><use href="#s11"/></svg><svg class="i"><use href="#s12"/></svg><svg class="i"><use href="#s13"/></svg>
        </div>
        <div class="sgroup r1"><svg class="i"><use href="#s14"/></svg></div>
        <div class="sgroup r3"><svg class="i"><use href="#s15"/></svg><svg class="i"><use href="#s16"/></svg><svg class="i"><use href="#s22"/></svg></div>
        <div class="sgroup r6"><svg class="i"><use href="#s17"/></svg><svg class="i"><use href="#s18"/></svg><svg class="i"><use href="#s23"/></svg><svg class="i"><use href="#s24"/></svg><svg class="i"><use href="#s19"/></svg><svg class="i"><use href="#s20"/></svg></div>
        <i class="sgrip"></i>
        <div class="sgroup rl"><svg class="i"><use href="#s14"/></svg><svg class="i"><use href="#s14"/></svg><svg class="i"><use href="#s21"/></svg></div>
      </div>
    </div>
    <section class="cmd" aria-label="Command line">
      <i class="cgrip"></i>
      <div class="lines"><p>Command:</p><p>Command:</p><label class="prompt">Command:<input type="text"></label></div>
    </section>
  </div>
</main>

<footer class="status">
  <output class="coords">2257.1106, 4126.1634, 0.0000</output>
  <div class="toggles">
    <button aria-label="Infer"><svg class="i"><use href="#t1"/></svg></button><button aria-label="Snap"><svg class="i"><use href="#t2"/></svg></button><button aria-label="Grid"><svg class="i"><use href="#t3"/></svg></button><button aria-label="Ortho"><svg class="i"><use href="#t4"/></svg></button><button aria-label="Polar"><svg class="i"><use href="#t5"/></svg></button><button class="on" aria-label="Object snap"><svg class="i"><use href="#t6"/></svg></button><button aria-label="3D snap"><svg class="i"><use href="#t7"/></svg></button><button aria-label="Tracking"><svg class="i"><use href="#t8"/></svg></button><button class="on" aria-label="Dynamic UCS"><svg class="i"><use href="#t9"/></svg></button><button class="on" aria-label="Dynamic input"><svg class="i"><use href="#t10"/></svg></button><button class="on" aria-label="Lineweight"><svg class="i"><use href="#t11"/></svg></button><button class="on" aria-label="Transparency"><svg class="i"><use href="#t12"/></svg></button><button aria-label="Quick properties"><svg class="i"><use href="#t13"/></svg></button><button aria-label="Selection cycling"><svg class="i"><use href="#t14"/></svg></button>
  </div>
  <div class="sr">
    <button class="model">MODEL</button>
    <div class="toggles"><button class="on" aria-label="Model space"><svg class="i"><use href="#mod"/></svg></button><button aria-label="Layout"><svg class="i"><use href="#lay"/></svg></button><button aria-label="Quick layouts"><svg class="i"><use href="#lay"/></svg></button><button aria-label="Quick drawings"><svg class="i"><use href="#two"/></svg></button></div>
    <button class="scale"><svg class="i"><use href="#anno"/></svg>1" = 60'<i class="car big"></i></button>
    <div class="toggles g"><button aria-label="Annotation visibility"><svg class="i"><use href="#anno"/><use href="#spark" x="8" width="8" height="8"/></svg></button><button class="dim" aria-label="Auto scale"><svg class="i"><use href="#anno"/></svg></button></div>
    <div class="toggles w"><button aria-label="Workspace"><svg class="i"><use href="#gear"/></svg></button><button aria-label="Lock"><svg class="i"><use href="#lockw"/></svg></button><button aria-label="Hardware"><svg class="i"><use href="#hw"/></svg></button></div>
    <div class="tray"><svg class="i"><use href="#tray"/></svg><svg class="i"><use href="#bulb"/></svg></div>
    <i class="car big"></i>
    <button class="clean" aria-label="Clean screen"><svg class="i"><use href="#clean"/></svg></button>
    <svg class="corner" viewBox="0 0 10 10"><path d="M8 1v9M5 4v6M2 7v3" stroke="#ddd" stroke-width="2" stroke-dasharray="2 1"/></svg>
  </div>
</footer>
</body>
</html>
```
FILE: styles.css
```css
* { box-sizing: border-box; }
body {
  margin: 0; height: 100vh; min-height: 700px; overflow: hidden;
  display: flex; flex-direction: column;
  background: #636363; color: #333;
  font: 10px/12px Lato, "Open Sans", sans-serif;
  border-left: 3px solid #4a4a4a;
}
h1, h2, h3, h4, p, ul { margin: 0; padding: 0; font: inherit; }
ul { list-style: none; }
button { font: inherit; color: inherit; background: none; border: 0; padding: 0; margin: 0; display: flex; align-items: center; justify-content: center; }
select, input { font: inherit; color: inherit; border: 0; padding: 0; margin: 0; outline: 0; border-radius: 0; }
.defs { position: absolute; width: 0; height: 0; }
.i { width: 14px; height: 14px; flex: none; fill: none; stroke: #555; stroke-width: 1; }
.i28 { width: 26px; height: 28px; flex: none; fill: none; }
.car { width: 5px; height: 3px; flex: none; background: currentColor; clip-path: polygon(0 0, 100% 0, 50% 100%); }
.car.big { width: 7px; height: 4px; color: #111; }

/* title bar */
.titlebar { display: grid; grid-template-columns: 36px 1fr; grid-template-rows: 22px 16px; background: linear-gradient(#444 0 1px, #8f8f8f 2px, #7b7b7b 10px, #555 21px, #404040 22px); }
.app { grid-row: 1 / 3; margin: 3px 3px 2px 1px; background: linear-gradient(#a5a5a5, #686868); border: 1px solid #b0b0b0; display: grid; justify-items: stretch; align-items: stretch; }
.app svg { grid-area: 1 / 1; width: 100%; height: 100%; }
.app span { grid-area: 1 / 1; align-self: end; justify-self: end; font: bold 7px/8px "Liberation Sans", sans-serif; color: #222; }
.topline { display: flex; align-items: center; }
.qat { display: flex; align-items: center; gap: 5px; padding-left: 3px; color: #222; }
.qat .i { width: 15px; height: 15px; }
.qat .car { color: #444; width: 4px; }
.qat .big { color: #111; width: 7px; }
.topline h1 { flex: 1; text-align: center; color: #e6e6e6; white-space: pre; }
.topline h1 span { padding-left: 5px; }
.play { width: 4px; height: 8px; background: #111; clip-path: polygon(0 0, 100% 50%, 0 100%); margin-right: 5px; }
.search { width: 144px; height: 17px; background: #f7f7f3; border: 1px solid #aaa; padding: 1px 3px; font-style: italic; margin-top: 2px; }
.search::placeholder { color: #777; opacity: 1; }
.info { display: flex; align-items: center; gap: 5px; padding-left: 3px; color: #333; }
.vsep { width: 1px; height: 14px; background: #777; }
.help { width: 14px; height: 14px; border-radius: 50%; background: #f5f7ff; border: 1px solid #333; color: #2449b0; font: bold 11px/12px "Liberation Sans", sans-serif; }
.win { display: flex; gap: 3px; padding: 0 6px 0 20px; }
.win svg { width: 10px; height: 10px; fill: none; stroke: #222; }
.tabs { display: flex; align-items: stretch; padding-top: 2px; color: #e2e2e2; }
.tabs button { padding: 0 7px 0 8px; white-space: nowrap; }
.tabs .on { background: linear-gradient(#e0e0e0, #f6f6f6); color: #333; padding: 0 7px; border-radius: 2px 2px 0 0; }
.tabs .mini { padding: 0 15px; }
.mini svg { width: 21px; height: 8px; }

/* ribbon */
.ribbon { display: flex; height: 80px; flex: none; background: linear-gradient(#cfcfcf, #8b8b8b); border-bottom: 2px solid #b5b5b5; }
.panel { display: flex; flex-direction: column; background: #fff; border-right: 1px solid #c8c8c8; flex: none; }
.body { flex: 1; display: flex; padding: 4px 3px 1px; gap: 1px; }
.panel footer { height: 16px; background: #eee; display: flex; align-items: center; justify-content: center; gap: 5px; color: #444; }
.panel footer .car { width: 6px; height: 4px; }
.p-pal { width: 93px; }
.p-gnd { width: 109px; }
.p-des { width: 257px; }
.p-prof { width: 107px; }
.p-draw { width: 85px; }
.p-mod { width: 141px; }
.p-lay { width: 171px; }
.p-clip { width: 63px; }
.col { display: grid; grid-template-rows: repeat(3, 19px); align-content: start; }
.col button { justify-content: flex-start; gap: 3px; white-space: nowrap; }
.col .car { margin-left: 2px; color: #555; }
.p-gnd .body { padding-left: 4px; }
.p-des .body { padding-left: 5px; }
.p-prof .body { padding-left: 11px; }
.c1 { width: 84px; }
.c2 { width: 78px; }
.large { flex-direction: column; justify-content: flex-start; padding-top: 2px; gap: 1px; }
.large.lit { width: 48px; }
.p-mod .large { width: 46px; }
.p-clip .large { width: 38px; }
.grid { display: grid; grid-auto-rows: 18px; gap: 1px 0; align-content: start; }
.g1 { grid-template-columns: 19px; }
.g2 { grid-template-columns: 19px 19px; }
.g3 { grid-template-columns: 19px 19px 19px; margin-right: 3px; }
.grid button { border: 1px solid #ddd; background: #fbfbfb; }
.large.lit, .grid .lit { background: #c5dff7; border: 1px solid #6fa4dc; }
.split { gap: 3px; justify-content: flex-start; }
.split1 { grid-template-columns: 28px; }
.split2 { grid-template-columns: 28px 28px; column-gap: 1px; margin: 0 2px 0 -1px; }
.stack { flex-direction: column; padding-left: 2px; }
.layrow { display: flex; gap: 4px; }
.layrow .i { width: 15px; height: 15px; }
.combo { display: flex; align-items: center; height: 18px; width: 160px; padding-right: 3px; border: 1px solid #ccc; background: linear-gradient(#f4f4f4, #fbfbfb); }
.combo .i { width: 14px; margin-right: 1px; }
.combo select { flex: 1; align-self: stretch; appearance: none; padding-left: 2px; background: none; }
.swatch { width: 12px; height: 12px; border: 1px solid #222; background: #fff; margin: 0 2px; }

/* workspace */
.work { flex: 1; display: flex; min-height: 0; padding-top: 5px; gap: 5px; }
.toolspace { display: flex; width: 306px; flex: none; padding: 1px 0 2px; }
.ts { flex: 1; display: flex; flex-direction: column; background: #f0f0f0; min-width: 0; }
.ts h2 { height: 16px; background: #9f9f9f; display: flex; align-items: center; gap: 6px; padding-left: 3px; border-radius: 3px 3px 0 0; color: #222; }
.grip { width: 3px; height: 10px; background: repeating-linear-gradient(#444 0 1px, transparent 1px 3px); }
.tsbar { display: flex; align-items: center; height: 23px; padding: 0 4px 0 3px; gap: 8px; }
.push { margin-left: auto; }
.q { width: 13px; height: 13px; border: 1px solid #334; background: #fff; font-weight: bold; color: #234; }
.view { width: auto; height: 17px; border: 1px solid #777; border-radius: 2px; background: linear-gradient(#f4f4f4 50%, #d2d2d2); color: #222; margin-bottom: 2px; }
.treebox { display: flex; flex: 1; background: #fff; border-top: 1px solid #bbb; min-height: 0; }
.tree { flex: 1; padding: 0 2px 0 6px; color: #1c1c1c; overflow: hidden; }
.tree li { background: repeating-linear-gradient(#aaa 0 1px, transparent 1px 2px) 6px 0 / 1px 100% no-repeat; }
.tree li:last-child { background-size: 1px 8px; }
.tree ul { padding-left: 15px; }
.row { display: flex; align-items: center; height: 16px; }
.row button { width: 9px; height: 9px; margin: 0 4px 0 2px; border: 1px solid #9a9a9a; background: linear-gradient(#333, #333) center / 5px 1px no-repeat, #fff; }
.row .plus { background: linear-gradient(#333, #333) center / 5px 1px no-repeat, linear-gradient(#333, #333) center / 1px 5px no-repeat, #fff; }
.leaf::before { content: ""; width: 7px; height: 1px; margin-left: 8px; background: repeating-linear-gradient(to right, #aaa 0 1px, transparent 1px 2px); }
.row > span { padding: 2px 0 2px 3px; margin-left: 1px; white-space: nowrap; }
.row .b { font-weight: bold; }
.row .sel { flex: 1; background: #a0a0a0; color: #222; }
.flag { width: 4px; height: 5px; background: linear-gradient(135deg, #777a20 50%, transparent 50%); align-self: flex-start; margin: 1px 9px 0 3px; }
.scroll { width: 14px; background: #f0f0f0; display: flex; flex-direction: column; align-items: center; gap: 6px; padding: 6px 0; color: #444; }
.up { width: 5px; height: 3px; background: #555; clip-path: polygon(50% 0, 100% 100%, 0 100%); }
.thumb { flex: 1; width: 12px; margin-bottom: 14px; border: 1px solid #999; background: linear-gradient(to right, #f8f8f8, #cfcfcf); display: flex; align-items: center; justify-content: center; color: #666; }
.preview { height: 82px; margin-top: 1px; border-top: 1px solid #aaa; box-shadow: inset 0 6px #f4f4f4, inset 0 7px #aaa; border-bottom: 2px solid #ccc; background: #efefef; }
.vtabs { width: 16px; display: flex; flex-direction: column; padding-top: 17px; }
.vtabs button { height: 97px; writing-mode: vertical-rl; transform: rotate(180deg); background: #c6c6c6; color: #222; border-top: 1px solid #777; }
.vtabs .on { background: #f2f2f2; }
.right { flex: 1; display: flex; flex-direction: column; min-width: 0; }
.upper { flex: 1; display: flex; min-height: 0; gap: 4px; }
.canvas { flex: 1; position: relative; overflow: hidden; background: #20272f; border: 1px solid #ddd; border-top-color: #888; min-width: 0; }
.map { width: 100%; height: 100%; display: block; fill: none; stroke-width: 3; }
.cy { stroke: #2fbf95; }
.wh { stroke: #b4bac0; stroke-width: 2.500; }
.wh2 { stroke: #949aa0; stroke-width: 2.500; }
.gr { stroke: #6c7278; stroke-width: 2.500; }
.road { stroke: #0da60d; stroke-width: 10; }
.ticks { stroke: none; marker: url(#tick); }
.ucs { stroke: #ccc; stroke-width: 1; }
.ucs text { font: 300 14px Lato, sans-serif; fill: #ccc; stroke: none; }
.vp { position: absolute; left: 4px; top: 3px; color: #d8d8d8; }
.docwin { position: absolute; right: 7px; top: 5px; display: flex; gap: 6px; }
.docwin svg { width: 10px; height: 10px; stroke: #eee; fill: none; }
.cube { position: absolute; right: 11px; top: 26px; width: 100px; height: 130px; }
.nsew { font: bold 14px "Liberation Sans", sans-serif; fill: #b0b4b7; }
.top { font: bold 10px "Open Sans", sans-serif; fill: #3c4248; }
.wcs { font: bold 8px "Liberation Sans", sans-serif; fill: #5b6064; }
.navbar { position: absolute; right: 2px; top: 178px; width: 26px; height: 170px; background: #8a939780; border-radius: 2px; }

/* references window */
.dialog { position: absolute; left: 27px; top: 114px; width: 421px; height: 268px; background: #f0f1f0; border: 1px solid #b4d0dc; box-shadow: inset 0 0 0 1px #f8fcff; color: #111; font: 8px/10px "DejaVu Sans Condensed", "DejaVu Sans", sans-serif; padding: 0 12px 0 10px; }
.dialog header { display: flex; height: 15px; margin: 0 -12px 0 -10px; padding-left: 1px; background: linear-gradient(#cfdff0, #9db8d8); gap: 1px; }
.dialog h3 { flex: 1; font: 10px/15px Lato, sans-serif; color: #234; }
.dialog header button { width: 19px; height: 13px; border: 1px solid #8294ab; border-top: 0; background: #c3d2e4; }
.dialog header .x { width: 34px; background: linear-gradient(#dc8a78, #c33a26); border-color: #7c2c20; }
.dialog header svg { height: 10px; fill: none; }
.dialog header .dq { font: bold 11px/12px "Liberation Sans", sans-serif; color: #fff; text-shadow: 0 0 2px #234; }
.dialog h4 { font: bold 9px/11px "DejaVu Sans Condensed", sans-serif; margin-top: 10px; }
.dialog p { margin: 6px 0 26px; }
.list { border: 1px solid #888; border-right-color: #fff; border-bottom: 0; height: 163px; }
.list table { width: 100%; border-spacing: 0; }
.list td { height: 16px; padding: 0 3px; border-bottom: 1px solid #a8a8a4; background: #ffffe8; border-right: 2px solid #f2dccb; }
.list .end td { height: 4px; border-bottom: 0; }
.list .sel td { background: #3399f0; border-color: #3399f0; color: #d5e9ff; }
.size { position: absolute; right: 1px; bottom: 1px; width: 10px; height: 10px; }
.menu { position: absolute; left: 165px; top: 319px; width: 170px; padding: 2px; background: linear-gradient(to right, #f1f1f1 19px, #fff 20px); border: 1px solid #b5b5b5; color: #222; }
.menu button { width: 100%; height: 16px; justify-content: flex-start; padding-left: 31px; }
.menu hr { margin: 3px 0 3px 18px; border: 0; border-top: 1px solid #ccc; }
.cursor { position: absolute; left: 182px; top: 321px; width: 11px; height: 17px; }

/* side toolbar */
.side { width: 20px; margin-right: 6px; display: flex; flex-direction: column; align-self: flex-start; background: #eee; border-left: 1px solid #999; border-right: 1px solid #999; }
.sgrip { height: 6px; background: repeating-linear-gradient(#444 0 1px, #777 1px 2px); }
.sgroup { display: grid; justify-items: center; align-items: center; grid-auto-rows: 1fr; border-bottom: 1px solid #bbb; }
.side .i { width: 16px; height: 16px; }
.r13 { height: 230px; }
.r1 { height: 22px; }
.r3 { height: 58px; }
.r6 { height: 108px; }
.rl { height: 54px; }

/* command line */
.cmd { display: flex; height: 48px; margin-top: 4px; margin-right: 3px; background: #c6c6c6; flex: none; }
.cgrip { width: 12px; background: repeating-linear-gradient(to right, #444 0 2px, #aaa 2px 3px) 2px 3px / 8px 3px no-repeat, #a4a4a4; }
.lines { flex: 1; display: flex; flex-direction: column; font: 9px/12px "DejaVu Sans Mono", monospace; color: #222; padding-top: 2px; }
.lines p { padding-left: 1px; }
.prompt { display: flex; margin-top: auto; background: #fff; padding: 2px 1px 0; height: 14px; align-items: center; }
.prompt input { flex: 1; background: none; }

/* status bar */
.status { display: flex; height: 21px; flex: none; background: linear-gradient(#222 0 1px, #999 2px, #6a6a6a 19px, #333 20px); padding: 1px 0 2px; color: #1a1a1a; font: 9px/12px "Liberation Sans", Arial, sans-serif; }
.coords { width: 166px; display: flex; align-items: center; padding-left: 10px; background: #8a8a8a80; }
.toggles { display: grid; grid-auto-flow: column; grid-auto-columns: 1fr; gap: 1px; width: 247px; }
.toggles button { background: linear-gradient(#cdcdcd, #969696); border: 1px solid #aaa; }
.toggles .on { background: linear-gradient(#d8f2f6, #84bccb); }
.sr { margin-left: auto; display: flex; align-items: center; }
.sr .toggles, .sr > button { height: 18px; }
.sr .toggles { width: 71px; }
.model { padding-right: 3px; }
.scale { width: 57px; margin-left: 9px; gap: 2px; white-space: nowrap; background: linear-gradient(#bbb, #8a8a8a); }
.sr .g { width: 35px; }
.sr .w { width: 54px; margin-left: 5px; }
.dim { opacity: .6; }
.tray { display: flex; gap: 3px; margin: 0 5px; padding: 1px 2px; background: #aaa; border: 1px solid #ccc; }
.clean { width: 17px; margin: 0 5px 0 0; }
.corner { width: 10px; height: 10px; margin-right: 2px; align-self: flex-end; }
```
